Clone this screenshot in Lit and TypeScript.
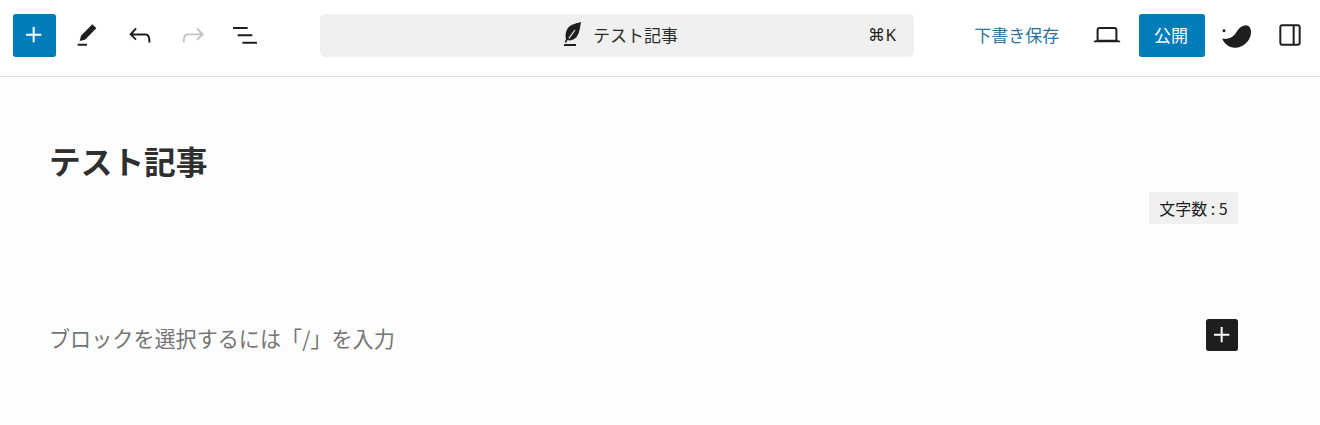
import { LitElement, html, css } from "lit";
import { customElement } from "lit/decorators.js";

const icon = (d: string, cls = "") => html`<svg class="ic ${cls}" viewBox="0 0 24 24" fill="currentColor"><path d=${d}></path></svg>`;

@customElement("app-root")
export class AppRoot extends LitElement {
  static styles = css`
    :host { display: block; height: 425px; background: #fdfdfd; overflow: hidden;
      font-family: "Noto Sans CJK JP", "Noto Sans", sans-serif; color: #1e1e1e; }
    header { display: flex; align-items: flex-start; height: 77px; box-sizing: border-box; background: #fff;
      border-bottom: 1.33px solid #e0e0e0; padding: 14px 8.3px 0 13px; }
    .left { display: flex; align-items: center; width: 307px; gap: 10.1px; flex: none; }
    .btn { width: 42.67px; height: 42.67px; display: flex; align-items: center; justify-content: center; border-radius: 2.67px; flex: none; }
    .ic { width: 32px; height: 32px; display: block; }
    .primary { background: #007cba; color: #fff; }
    .off { color: #c4c4c4; }
    .bar { width: 594px; height: 42.67px; flex: none; background: #f0f0f0; border-radius: 5.33px; display: grid;
      grid-template-columns: 1fr auto 1fr; align-items: center; font-size: 17px; }
    .doc { display: flex; align-items: center; gap: 5px; grid-column: 2; color: #2b2b2b; }
    .doc span { padding-bottom: 2px; }
    .leaf { width: 32px; height: 32px; display: block; color: #1e1e1e; }
    .kbd { justify-self: end; margin-right: 18px; font-size: 17px; font-family: "Noto Sans", sans-serif; padding-bottom: 2px; }
    .right { display: flex; align-items: center; flex: 1; justify-content: flex-end; }
    .save { color: #2a749f; font-size: 17px; margin-right: 26.5px; padding-bottom: 2px; }
    .pub { background: #007cba; color: #fff; font-size: 17px; height: 42.67px; width: 66px; display: flex; box-sizing: border-box;
      align-items: center; justify-content: center; border-radius: 2.67px; margin: 0 10.67px; padding: 0 2px 2px 0; }
    .last { margin-left: 10.67px; }
    main { padding: 57px 82px 0 49px; }
    h1 { margin: 0; font-size: 31.7px; line-height: 52px; font-weight: 700; color: #2f2f2f; }
    .count-row { display: flex; justify-content: flex-end; margin-top: 6px; }
    .count { background: #f0f0f0; font-size: 16px; height: 32px; padding: 0 10.3px; display: flex; align-items: center; color: #1e1e1e; }
    .ph-row { display: flex; justify-content: space-between; align-items: flex-start; margin-top: 95px; }
    .ph { font-size: 21.1px; color: #757575; line-height: 32px; padding-top: 3px; }
    .add { width: 32px; height: 32px; background: #1e1e1e; color: #fff; border-radius: 2.67px; display: flex; align-items: center; justify-content: center; }
  `;

  render() {
    const plus = "M11 12.5V17.5H12.5V12.5H17.5V11H12.5V6H11V11H6V12.5H11Z";
    return html`
      <header>
        <div class="left">
          <div class="btn primary">${icon(plus)}</div>
          <div class="btn">${icon("m19 7-3-3-8.5 8.5-1 4 4-1L19 7Zm-7 11.5H5V20h7v-1.5Z")}</div>
          <div class="btn">${icon("M18.3 11.7c-.6-.6-1.4-.9-2.3-.9H6.7l2.9-3.3-1.1-1-4.5 5L8.5 16l1-1-2.7-2.7H16c.5 0 .9.2 1.3.5 1 1 1 3.4 1 4.5v.3h1.5v-.2c0-1.5 0-4.3-1.5-5.7z")}</div>
          <div class="btn off">${icon("M15.6 6.5l-1.1 1 2.9 3.3H8c-.9 0-1.7.3-2.3.9-1.4 1.5-1.4 4.2-1.4 5.6v.2h1.5v-.3c0-1.1 0-3.5 1-4.5.3-.3.7-.5 1.3-.5h9.2L14.5 15l1.1 1.1 4.6-4.6-4.6-5z")}</div>
          <div class="btn">${icon("M3 6h11v1.5H3V6Zm3.5 5.5h11V13h-11v-1.5ZM21 17H10v1.5h11V17Z")}</div>
        </div>
        <div class="bar">
          <div class="doc">
            <svg class="leaf" viewBox="0 0 24 24" fill="currentColor" fill-rule="evenodd">
              <path d="M18.8 2.200C14 3.500 9.500 4.500 8 8.500C7 11 7 13.500 7.500 15L6.600 17.500L7.800 17.800L8.600 15.800C11 16.500 14 15.800 15.800 13C17.800 9.800 18 6 18.800 2.200ZM9.300 14.300L10 14.900L14.600 8.500L13.900 8Z"></path>
              <path d="M6 18.750h9v1.500H6z"></path>
            </svg>
            <span>テスト記事</span>
          </div>
          <span class="kbd">⌘K</span>
        </div>
        <div class="right">
          <span class="save">下書き保存</span>
          <div class="btn">${icon("M20.5 16h-.7V8c0-1.100-.9-2-2-2H6.200c-1.100 0-2 .9-2 2v8h-.7c-.8 0-1.500.7-1.500 1.500h20c0-.8-.7-1.500-1.500-1.500zM5.700 8c0-.3.2-.5.5-.5h11.600c.3 0 .5.200.5.500v7.600H5.700V8z")}</div>
          <div class="pub">公開</div>
          <div class="btn">
            <svg class="ic" viewBox="0 0 24 24" fill="currentColor">
              <path d="M0.800 14.600C4 15.500 8 14.500 10.500 11.500C12.500 8 14.500 5.200 18 4.800C21 4.500 22.800 7 22.500 10.500C22 16.500 16.500 21.700 10.500 21.600C6 21.500 2.500 18.500 0.800 14.600Z"></path>
              <circle cx="2.250" cy="8.800" r="1.100"></circle>
            </svg>
          </div>
          <div class="btn last">${icon("M18 4H6c-1.100 0-2 .9-2 2v12c0 1.100.9 2 2 2h12c1.100 0 2-.9 2-2V6c0-1.100-.9-2-2-2zm-4 14.500H6c-.3 0-.5-.2-.5-.5V6c0-.3.2-.5.5-.5h8v13zm4.500-.5c0 .3-.2.5-.5.5h-2.500v-13H18c.3 0 .5.2.5.5v12z")}</div>
        </div>
      </header>
      <main>
        <h1>テスト記事</h1>
        <div class="count-row"><div class="count">文字数 : 5</div></div>
        <div class="ph-row">
          <span class="ph">ブロックを選択するには「/」を入力</span>
          <div class="add">${icon(plus)}</div>
        </div>
      </main>
    `;
  }
}
